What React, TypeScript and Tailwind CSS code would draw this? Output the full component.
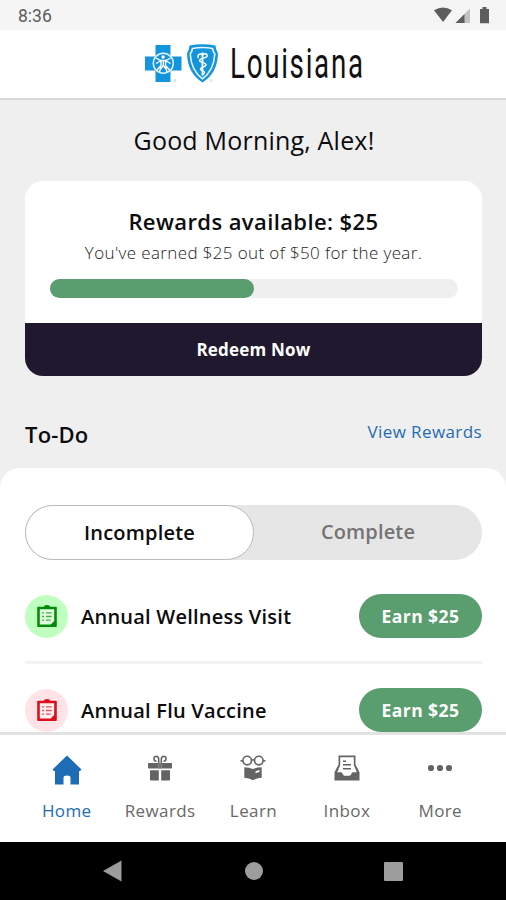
import React from "react";

function BlueCross() {
  return (
    <svg className="block" width="38" height="40" viewBox="0 0 38 40" fill="none">
      <path d="M11.500 1h15v11.500H37.500v14H26.500V38h-15V26.500H1v-14h10.500z" fill="#1494dc" />
      <circle cx="19.300" cy="19.200" r="10" stroke="#dff2fd" strokeWidth="1.500" />
      <circle cx="19.100" cy="13" r="1.700" fill="#fff" />
      <path
        d="M12 14l4.500 2.500h5.500l4.500-2.500M17 16.500v5l-4.500 5M21.500 16.500v5l4.500 5M12 19.500l4.500-2.500M26.500 19.500L22 17M19.300 16v5M16.500 25l2.800-3.500L22 25M17 22.500l-1.500 5.500M21.500 22.500l1.500 5.500"
        stroke="#fff"
        strokeWidth="1.400"
      />
      <circle cx="31" cy="36.500" r="1" stroke="#8ccdf2" strokeWidth=".6" />
    </svg>
  );
}

function BlueShield() {
  return (
    <svg className="block" width="32" height="40" viewBox="0 0 32 40" fill="none">
      <path d="M2.500 1.500Q15.500-1.200 28.500 1.500 28.500 5 31 9.500 30.500 29 15.500 38.500.500 29 0 9.500 2.500 5 2.500 1.500z" fill="#1494dc" />
      <path d="M5.500 4.500Q15.500 2.400 25.500 4.500 26 7.500 27.800 10 26.800 26.500 15.500 34.800 4.200 26.500 3.200 10 5 7.500 5.500 4.500z" stroke="#e4f4fd" strokeWidth="1.600" />
      <path d="M15.500 8.500v23" stroke="#fff" strokeWidth="1.800" />
      <path
        d="M11.500 14c-2-3 1.500-5 4-3.200 2.500-2 5.500-.5 4.500 1.500-1.500 2.200-7 1.500-7.500 4 0 2.700 6.500 2 6.500 4.500s-5.500 2-5.500 4.200 4 1.500 4 3.300-2 1.500-2 3"
        stroke="#fff"
        strokeWidth="1.500"
      />
      <circle cx="24.300" cy="36.500" r="1" stroke="#8ccdf2" strokeWidth=".6" />
    </svg>
  );
}

function StatusIcons() {
  return (
    <svg className="block" width="58" height="18" viewBox="0 0 58 18">
      <path d="M0 4.200Q9-1.200 18 4.200L9 16z" fill="#5d5d5d" />
      <path d="M36 2.500V17H21.500z" fill="#c2c2c2" />
      <path d="M30.500 8V17h-9z" fill="#5d5d5d" />
      <path d="M46 3h2.500V1h4v2H55v14.200h-9z" fill="#5d5d5d" />
    </svg>
  );
}

function Clipboard({ color, paper }: { color: string; paper: string }) {
  return (
    <svg className="block" width="20" height="22" viewBox="0 0 20 22">
      <path d="M1 1.800H7V1Q10-.8 13 1V1.800h6q.8 0 .8.800V21q0 1-1 1H1.200q-1 0-1-1V2.600q0-.8.8-.8z" fill={color} />
      <path d="M2.800 4.200h14.400v11.800l-3.500 3.500H2.800z" fill={paper} />
      <g stroke={color} strokeWidth="1.300" opacity=".7">
        <path d="M5 7.800h2.200M9 7.800h5.700M5 11.500h2.200M9 11.500h5.700M5 15.200h2.200M9 15.200h4.700" />
      </g>
    </svg>
  );
}

function HomeIcon() {
  return (
    <svg className="block" width="30" height="30" viewBox="0 0 30 30">
      <path d="M15 .5L29.500 14.500 28 16H27V29.500H18.500V22.500Q18.500 20.500 15 20.500T11.500 22.500V29.500H3V16H2L.500 14.500z" fill="#1d6cb5" />
    </svg>
  );
}

function GiftIcon() {
  return (
    <svg className="block" width="26" height="26" viewBox="0 0 26 26">
      <g fill="#646464">
        <rect x="1" y="8" width="24" height="5.500" rx=".8" />
        <path d="M3 15.200h8.800V25.500H4q-1 0-1-1zM14.200 15.200H23V24.500q0 1-1 1h-7.800z" />
      </g>
      <path d="M11.800 8v5.500M14.200 8v5.500" stroke="#a5a5a5" strokeWidth=".7" />
      <g fill="none" stroke="#646464" strokeWidth="1.600">
        <path d="M11.700 8V4.200Q11.500 1.200 9.200 1.200 6.800 1.500 7 4 7.200 6.300 9.500 6.200M14.300 8V4.200Q14.500 1.200 16.800 1.200 19.200 1.500 19 4 18.800 6.300 16.500 6.200" />
      </g>
    </svg>
  );
}

function LearnIcon() {
  return (
    <svg className="block" width="26" height="26" viewBox="0 0 26 26">
      <g fill="none" stroke="#646464" strokeWidth="1.600">
        <circle cx="7.200" cy="5.600" r="4.300" />
        <circle cx="18.800" cy="5.600" r="4.300" />
        <path d="M11.200 5.500q1.800-1.400 3.600 0M3 5.500L.500 6M23 5.500l2.500.5" />
      </g>
      <path d="M4.300 12.300Q9 12.300 13 14 17 12.300 21.700 12.300V22.800Q17 22.800 13 25.300 9 22.800 4.300 22.800z" fill="#646464" />
      <path d="M15.500 16.500q2-1.100 4-1.200v1.700q-2 .2-4 1.200z" fill="#fff" />
    </svg>
  );
}

function InboxIcon() {
  return (
    <svg className="block" width="26" height="26" viewBox="0 0 26 26">
      <path d="M4.500.5h17v9L25.500 17.200V25.500H.500V17.200L4.500 9.500z" fill="#646464" />
      <path d="M6.200 2.200h13.600V10l3 7.300H18.500L16 20.800H10L7.500 17.300H3.300L6.200 10z" fill="#fff" />
      <path d="M9 6.200h3M9 9.800h8M9 13.800h8" stroke="#646464" strokeWidth="1.400" />
    </svg>
  );
}

function MoreIcon() {
  return (
    <svg className="block" width="26" height="26" viewBox="0 0 26 26" fill="#646464">
      <circle cx="4" cy="13" r="3.100" />
      <circle cx="13" cy="13" r="3.100" />
      <circle cx="22" cy="13" r="3.100" />
    </svg>
  );
}

function TodoRow({ title, badge, children }: { title: string; badge: string; children: React.ReactNode }) {
  return (
    <div className="flex h-[44px] shrink-0 items-center">
      <div className={`flex size-[43px] items-center justify-center rounded-full ${badge}`}>{children}</div>
      <div className="ml-[13px] flex-1 whitespace-nowrap pt-px text-[20px] font-semibold leading-6 tracking-[0.230px]">{title}</div>
      <button className="h-[44px] w-[123px] rounded-full bg-[#5a9d6e] pt-px text-[17.500px] font-bold tracking-[0.450px] text-white">Earn $25</button>
    </div>
  );
}

function NavItem({ label, active, children }: { label: string; active?: boolean; children: React.ReactNode }) {
  return (
    <div className="flex w-[93.400px] flex-col items-center">
      <div className="flex h-[38px] items-center">{children}</div>
      <div className={`mt-[12px] text-[17px] font-medium leading-6 tracking-[0.400px] ${active ? "text-[#1d6cb5]" : "text-[#686868]"}`}>{label}</div>
    </div>
  );
}

export default function App() {
  return (
    <div className="flex h-[900px] w-[506px] flex-col overflow-hidden bg-[#efefef] font-['Open_Sans','Noto_Sans',sans-serif] text-[#0c0c0e]">
      <div className="flex h-[30px] shrink-0 items-center justify-between bg-[#f5f5f5] pl-[18px] pr-[14px]">
        <span className="pt-[2px] font-[Roboto,sans-serif] text-[17.500px] leading-5 text-[#5d5d5d]">8:36</span>
        <StatusIcons />
      </div>
      <header className="flex h-[70px] shrink-0 border-b-2 border-[#dadada] bg-white pl-[144px] pt-[14px]">
        <BlueCross />
        <div className="ml-[5px]"><BlueShield /></div>
        <div className="ml-[11px] mt-[-5px] w-[132px]">
          <span className="inline-block origin-left scale-x-[0.660] whitespace-nowrap font-[Roboto,sans-serif] text-[42px] font-normal leading-[50px] tracking-[2.600px] text-[#111]">Louisiana</span>
        </div>
      </header>
      <h1 className="mt-[23px] shrink-0 pl-[2px] text-center text-[25px] leading-[35px] tracking-[0.200px]">Good Morning, Alex!</h1>
      <section className="mx-[25px] mt-[23px] flex h-[195px] w-[457px] shrink-0 flex-col overflow-hidden rounded-[18px] bg-white">
        <h2 className="mt-[25px] text-center text-[22px] font-semibold leading-[30px] tracking-[0.400px]">Rewards available: $25</h2>
        <p className="mt-[5px] text-center text-[17px] font-light leading-6 tracking-[0.370px] text-[#222]">You've earned $25 out of $50 for the year.</p>
        <div className="mx-[25px] mt-[14px] h-[19px] w-[408px] rounded-full bg-[#efefef]">
          <div className="h-full w-1/2 rounded-full bg-[#5a9d6e]" />
        </div>
        <button className="mt-auto h-[53px] shrink-0 bg-[#20182e] pt-px text-[17px] font-bold tracking-[0.200px] text-white">Redeem Now</button>
      </section>
      <div className="mt-[43px] flex h-[49px] shrink-0 justify-between pl-[25px] pr-[24px]">
        <h2 className="text-[22px] font-semibold leading-[30px] tracking-[0.200px]">To-Do</h2>
        <a className="text-[17px] leading-[25px] tracking-[0.400px] text-[#1d6cb5]">View Rewards</a>
      </div>
      <main className="flex min-h-0 flex-1 flex-col overflow-hidden rounded-t-[20px] bg-white pl-[25px] pr-[24px] pt-[37px]">
        <div className="flex h-[55px] w-[457px] shrink-0 rounded-full bg-[#e6e6e6]">
          <div className="flex w-[229px] items-center justify-center rounded-full border border-[#b9b9b9] bg-white pt-px text-[20px] font-semibold tracking-[0.200px]">Incomplete</div>
          <div className="flex flex-1 items-center justify-center pb-[2px] text-[20px] font-semibold tracking-[0.150px] text-[#747474]">Complete</div>
        </div>
        <div className="h-[34px] shrink-0" />
        <TodoRow title="Annual Wellness Visit" badge="bg-[#bfffbf]">
          <Clipboard color="#078a0b" paper="#dfffdf" />
        </TodoRow>
        <div className="mb-[24px] mt-[23px] h-[3px] shrink-0 bg-[#f3f3f3]" />
        <TodoRow title="Annual Flu Vaccine" badge="bg-[#ffe3e6]">
          <Clipboard color="#dc1020" paper="#fff0f1" />
        </TodoRow>
      </main>
      <nav className="flex h-[110px] shrink-0 justify-center border-t-[3px] border-[#e2e2e2] bg-white pl-[1px] pt-[14px]">
        <NavItem label="Home" active><div className="pt-[4px]"><HomeIcon /></div></NavItem>
        <NavItem label="Rewards"><GiftIcon /></NavItem>
        <NavItem label="Learn"><LearnIcon /></NavItem>
        <NavItem label="Inbox"><InboxIcon /></NavItem>
        <NavItem label="More"><MoreIcon /></NavItem>
      </nav>
      <footer className="flex h-[58px] shrink-0 items-center bg-black pl-[102px]">
        <svg className="block" width="20" height="22" viewBox="0 0 20 22"><path d="M1 11L19.500.500v21z" fill="#9d9d9d" /></svg>
        <div className="ml-[123px] size-[18px] rounded-full bg-[#9d9d9d]" />
        <div className="ml-[121px] size-[19px] rounded-[1px] bg-[#9d9d9d]" />
      </footer>
    </div>
  );
}
